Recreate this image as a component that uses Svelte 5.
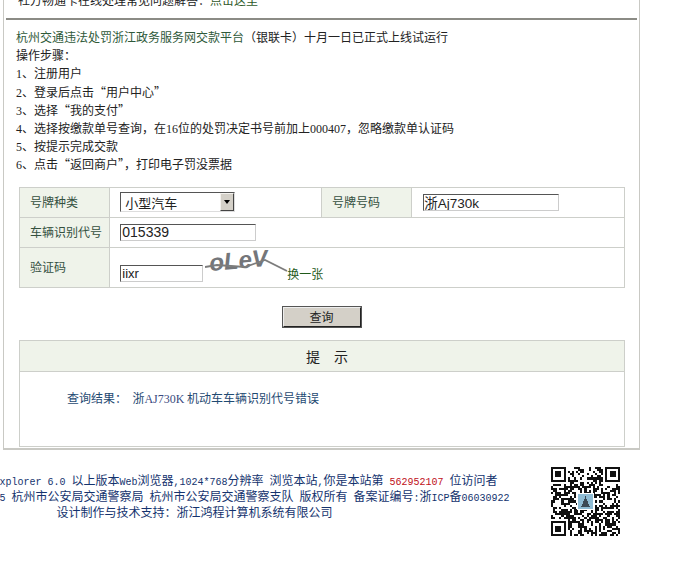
<script>
	// seeded noise so the QR code looks the same on every run
	const size = 33;
	const cells = [];
	let seed = 73;
	function rnd() {
		seed = (seed * 1103515245 + 12345) & 0x7fffffff;
		return (seed >> 12) % 100;
	}
	function inFinder(x, y) {
		return (x < 8 && y < 8) || (x >= size - 8 && y < 8) || (x < 8 && y >= size - 8);
	}
	for (let y = 0; y < size; y++) {
		for (let x = 0; x < size; x++) {
			if (!inFinder(x, y) && rnd() < 52) cells.push({ x, y });
		}
	}
	const finders = [
		[0, 0],
		[size - 7, 0],
		[0, size - 7]
	];
</script>

<div class="page">
	<div class="panel">
		<div class="top-note">社方畅通卡在线处理常见问题解答：<a href="#top">点击这里</a></div>
		<hr class="rule" />

		<div class="notice">
			<div><a href="#pay">杭州交通违法处罚浙江政务服务网交款平台</a>（银联卡）十月一日已正式上线试运行</div>
			<div>操作步骤：</div>
			<div><span class="num">1</span>、注册用户</div>
			<div><span class="num">2</span>、登录后点击“用户中心”</div>
			<div><span class="num">3</span>、选择“我的支付”</div>
			<div><span class="num">4</span>、选择按缴款单号查询，在<span class="num">16</span>位的处罚决定书号前加上<span class="num">000407</span>，忽略缴款单认证码</div>
			<div><span class="num">5</span>、按提示完成交款</div>
			<div><span class="num">6</span>、点击“返回商户”，打印电子罚没票据</div>
		</div>

		<table class="form">
			<tbody>
				<tr class="row">
					<td class="label">号牌种类</td>
					<td class="value first">
						<span class="select">
							<select>
								<option>小型汽车</option>
							</select>
							<span class="arrow"></span>
						</span>
					</td>
					<td class="label">号牌号码</td>
					<td class="value"><input class="field plate" value="浙Aj730k" /></td>
				</tr>
				<tr class="row">
					<td class="label">车辆识别代号</td>
					<td class="value first" colspan="3"><input class="field vin" value="015339" /></td>
				</tr>
				<tr class="row tall">
					<td class="label">验证码</td>
					<td class="value first captcha-cell" colspan="3">
						<div class="captcha-wrap">
							<input class="field code" value="iixr" />
							<svg class="captcha" width="84" height="30" viewBox="0 0 84 30">
								<text x="5" y="21" class="captcha-text" transform="rotate(-5 5 21)">oLeV</text>
								<path d="M0 17 L12 15 L40 17 L60 10 L82 21" fill="none" stroke="#7c7c7c" stroke-width="1.8" />
							</svg>
							<a href="#next" class="swap">换一张</a>
						</div>
					</td>
				</tr>
			</tbody>
		</table>

		<div class="actions">
			<button class="query">查询</button>
		</div>

		<section class="hint">
			<h2>提　示</h2>
			<p>查询结果：&nbsp;&nbsp;浙<em>AJ730K</em> 机动车车辆识别代号错误</p>
		</section>
	</div>

	<footer class="footer">
		<div class="lines">
			<div class="line">建议使用<span class="lat">Internet Explorer 6.0&nbsp;</span>以上版本<span class="lat">Web</span>浏览器<span class="lat">,1024*768</span>分辨率<span class="lat">&nbsp;</span>浏览本站<span class="lat">,</span>你是本站第<span class="lat">&nbsp;<b>562952107</b>&nbsp;</span>位访问者</div>
			<div class="line"><span class="lat">Copyright © 2001-2005&nbsp;</span>杭州市公安局交通警察局<span class="lat">&nbsp;</span>杭州市公安局交通警察支队<span class="lat">&nbsp;</span>版权所有<span class="lat">&nbsp;</span>备案证编号<span class="lat">:</span>浙<span class="lat">ICP</span>备<span class="lat">06030922</span></div>
			<div class="line">设计制作与技术支持：浙江鸿程计算机系统有限公司</div>
		</div>
		<svg class="qr" width="69" height="69" viewBox="0 0 33 33" shape-rendering="crispEdges">
			{#each cells as c}
				<rect x={c.x} y={c.y} width="1" height="1" fill="#111" />
			{/each}
			{#each finders as f}
				<rect x={f[0]} y={f[1]} width="7" height="7" fill="#111" />
				<rect x={f[0] + 1} y={f[1] + 1} width="5" height="5" fill="#fff" />
				<rect x={f[0] + 2} y={f[1] + 2} width="3" height="3" fill="#111" />
			{/each}
			<rect x="12.5" y="12.5" width="8" height="8" fill="#fff" />
			<rect x="13" y="13" width="7" height="7" fill="#8fbcd4" />
			<path d="M16.5 14 L18.5 19 L14.5 19 Z" fill="#3c4a55" />
		</svg>
	</footer>
</div>

<style>
	:global(body) {
		margin: 0;
		background: #fff;
	}
	.page {
		width: 693px;
		height: 580px;
		overflow: hidden;
		font-family: 'Noto Sans CJK SC', 'Liberation Serif', sans-serif;
		font-size: 12px;
		color: #222;
	}
	.panel {
		box-sizing: border-box;
		width: 637px;
		height: 460px;
		margin: -10px 0 0 3px;
		padding: 0 2px;
		border: 1px solid #c9c9c4;
		border-top: none;
		border-bottom-width: 2px;
	}
	.top-note {
		height: 28px;
		padding-left: 12px;
		line-height: 20px;
	}
	.top-note a {
		color: #2f5a2a;
		text-decoration: none;
	}
	.rule {
		height: 2px;
		margin: 0;
		border: none;
		background: #8b8b85;
	}
	.notice {
		margin-top: 8px;
		padding-left: 10px;
		line-height: 18px;
	}
	.notice div {
		height: 18.2px;
	}
	.notice a {
		color: #2f5a3a;
		text-decoration: none;
	}
	.num {
		font-family: 'Liberation Serif', serif;
	}
	.form {
		width: 606px;
		margin: 13px 0 0 13px;
		border-collapse: collapse;
		table-layout: fixed;
	}
	.form td {
		border: 1px solid #cdcfca;
		padding: 0;
	}
	.row {
		height: 30px;
	}
	.row.tall {
		height: 40px;
	}
	.label {
		width: 79px;
		padding-left: 10px !important;
		background: #eff3ea;
		color: #34503f;
		line-height: 16px;
	}
	.value {
		padding-left: 11px !important;
		width: 200px;
	}
	.value.first {
		padding-left: 10px !important;
	}
	.select {
		position: relative;
		display: block;
		width: 115px;
		height: 20px;
	}
	.select select {
		appearance: none;
		box-sizing: border-box;
		width: 100%;
		height: 100%;
		margin: 0;
		padding: 0 0 0 4px;
		border: 1px solid;
		border-color: #555 #ddd #ddd #555;
		border-radius: 0;
		background: #fff;
		font: 13px 'Noto Sans CJK SC', sans-serif;
		color: #222;
	}
	.arrow {
		position: absolute;
		top: 1px;
		right: 1px;
		width: 14px;
		height: 18px;
		box-sizing: border-box;
		background: #d4d0c8;
		border: 1px solid;
		border-color: #f4f2ee #444 #444 #f4f2ee;
	}
	.arrow::after {
		content: '';
		position: absolute;
		top: 6px;
		left: 3px;
		border: 3px solid transparent;
		border-top: 4px solid #000;
		border-bottom: none;
	}
	.field {
		box-sizing: border-box;
		height: 17px;
		margin: 0;
		padding: 0 0 0 1px;
		border: 1px solid;
		border-color: #555 #ccc #ccc #555;
		background: #fff;
		font: 14px 'Liberation Sans', 'Noto Sans CJK SC', sans-serif;
		color: #222;
		display: block;
		outline: none;
	}
	.plate {
		width: 136px;
		padding-left: 0;
		font-size: 13.5px;
	}
	.vin {
		width: 136px;
	}
	.code {
		width: 83px;
		margin-top: 17px;
		font-size: 13px;
	}
	.captcha-cell {
		vertical-align: top;
	}
	.captcha-wrap {
		display: flex;
		align-items: flex-start;
	}
	.captcha {
		margin: 2px 0 0 2px;
		flex: none;
	}
	.captcha-text {
		font: bold italic 24px 'Liberation Sans', sans-serif;
		fill: #74767a;
		letter-spacing: 0;
	}
	.swap {
		margin: 17px 0 0 -2px;
		color: #1f5a1a;
		text-decoration: none;
		line-height: 18px;
	}
	.actions {
		display: flex;
		justify-content: center;
		margin-top: 18px;
	}
	.query {
		box-sizing: border-box;
		width: 80px;
		height: 22px;
		padding: 0;
		background: #d4d0c8;
		border: 2px solid;
		border-color: #eee #222 #222 #eee;
		outline: 1px solid #555;
		outline-offset: -1px;
		font: 12px 'Noto Sans CJK SC', sans-serif;
		color: #222;
	}
	.hint {
		box-sizing: border-box;
		width: 606px;
		height: 107px;
		margin: 12px 0 0 13px;
		border: 1px solid #cdcfca;
	}
	.hint h2 {
		margin: 0;
		height: 30px;
		padding-left: 10px;
		border-bottom: 1px solid #cdcfca;
		background: #eff3ea;
		font-size: 14px;
		font-weight: 400;
		line-height: 30px;
		text-align: center;
		color: #222;
	}
	.hint p {
		margin: 17px 0 0 47px;
		line-height: 18px;
		color: #1f4a72;
	}
	.hint em {
		font-family: 'Liberation Serif', serif;
		font-style: normal;
		color: #3a4a80;
	}
	.footer {
		display: flex;
		width: 640px;
		color: #14336e;
	}
	.lines {
		width: 389px;
		padding-top: 22px;
		flex: none;
	}
	.line {
		display: flex;
		justify-content: center;
		align-items: baseline;
		height: 16px;
		line-height: 16px;
		white-space: pre;
	}
	.lat {
		font-family: 'Liberation Mono', monospace;
		font-size: 10px;
	}
	.lat b {
		font-weight: 400;
		color: #c01020;
	}
	.qr {
		flex: none;
		margin: 17px 0 0 162px;
	}
</style>
